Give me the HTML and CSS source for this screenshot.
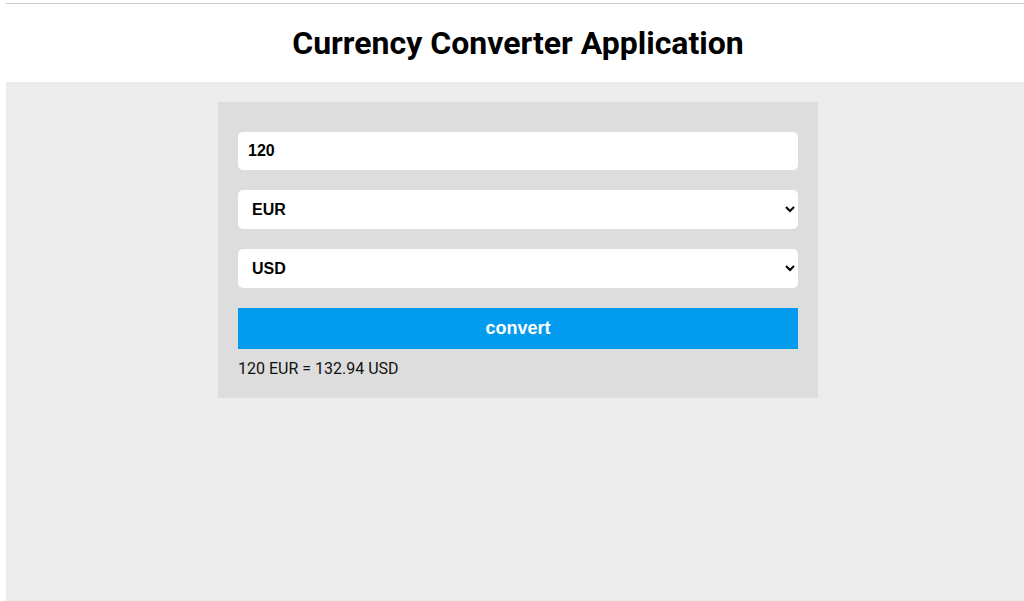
FILE: index.html
```html
<!DOCTYPE html>
<html>
<head>
<meta charset="utf-8">
<link rel="stylesheet" href="styles.css">
</head>
<body>
<div class="page">
  <header class="header">
    <h1 class="title">Currency Converter Application</h1>
  </header>
  <main class="main">
    <form class="card">
      <input class="field" type="text" value="120">
      <select class="field select">
        <option>EUR</option>
        <option>USD</option>
      </select>
      <select class="field select">
        <option>USD</option>
        <option>EUR</option>
      </select>
      <button class="btn" type="button">convert</button>
      <p class="result">120 EUR = 132.94 USD</p>
    </form>
  </main>
</div>
</body>
</html>
```
FILE: styles.css
```css
html, body {
  margin: 0;
  padding: 0;
  overflow: hidden;
  background: #fff;
}
.page {
  margin-left: 6px;
  width: 1024px;
  padding-top: 3px;
  height: 598px;
  display: flex;
  flex-direction: column;
}
.header {
  border-top: 1px solid #cccccc;
  height: 78px;
  display: flex;
  align-items: center;
  justify-content: center;
  background: #fff;
}
.title {
  margin: 0;
  font-family: Roboto, "Liberation Sans", sans-serif;
  font-weight: 700;
  font-size: 32px;
  line-height: 38px;
  color: #000;
}
.main {
  flex: 1;
  background: #ececec;
  padding-top: 20px;
  display: flex;
  flex-direction: column;
  align-items: center;
}
.card {
  width: 600px;
  box-sizing: border-box;
  background: #dddddd;
  padding: 30px 20px 20px;
  display: flex;
  flex-direction: column;
  gap: 20px;
  margin: 0;
}
.field {
  height: 38px;
  box-sizing: border-box;
  border: none;
  border-radius: 5px;
  background: #fff;
  padding: 0 10px;
  font-family: "Liberation Sans", Arial, sans-serif;
  font-weight: 700;
  font-size: 16px;
  color: #000;
  margin: 0;
  outline: none;
}
.select {
  height: 39px;
  padding: 0 6px 0 10px;
}
.btn {
  height: 41px;
  border: none;
  background: #039bee;
  color: #fff;
  font-family: "Liberation Sans", Arial, sans-serif;
  font-weight: 700;
  font-size: 18px;
  margin: 0;
  padding: 0;
}
.result {
  margin: -10px 0 0;
  font-family: Roboto, "Liberation Sans", sans-serif;
  font-size: 16px;
  color: #111;
  line-height: 19px;
}
```
